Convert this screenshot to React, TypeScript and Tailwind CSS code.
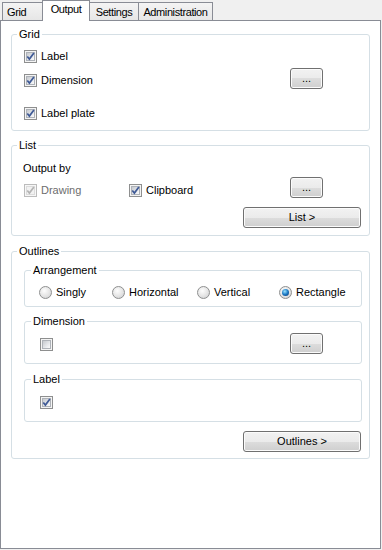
import React from "react";

function CheckBox({ checked = false, disabled = false }: { checked?: boolean; disabled?: boolean }) {
  return (
    <span
      className={
        disabled
          ? "relative w-[13px] h-[13px] shrink-0 border border-[#bcbcbc] bg-[#f7f7f7] p-px flex"
          : "relative w-[13px] h-[13px] shrink-0 border border-[#8e8f8f] bg-[#f4f4f4] p-px flex"
      }
    >
      <span
        className={
          disabled
            ? "flex-1 border border-[#dcdcdc] bg-[#f2f2f2]"
            : "flex-1 border border-[#aeb2b8] bg-[linear-gradient(135deg,#c6c9ce,#e9ebee_65%,#fafafa)]"
        }
      />
      {checked && (
        <svg className="absolute left-0 top-0" width="11" height="11" viewBox="0 0 11 11">
          <path
            d="M2.3 5.4 L4.4 8.1 L8.9 1.9"
            fill="none"
            stroke={disabled ? "#b4b4b4" : "#3f5a96"}
            strokeWidth="1.7"
          />
        </svg>
      )}
    </span>
  );
}

function Radio({ checked = false }: { checked?: boolean }) {
  return (
    <span className="w-[13px] h-[13px] shrink-0 rounded-full border border-[#8e8f8f] bg-[radial-gradient(circle_at_40%_35%,#fdfdfd,#e4e4e4_55%,#c9cbcf)] flex items-center justify-center">
      {checked && (
        <span className="w-[7px] h-[7px] rounded-full bg-[radial-gradient(circle_at_40%_35%,#9be4ff,#1a78c4_50%,#0b2f63)]" />
      )}
    </span>
  );
}

function Btn({ children, w }: { children: React.ReactNode; w: string }) {
  return (
    <div
      className={`${w} h-[21px] shrink-0 rounded-[3px] border border-[#707070] bg-[linear-gradient(to_bottom,#f2f2f2_0%,#ebebeb_50%,#dddddd_50%,#cfcfcf_100%)] shadow-[inset_0_0_0_1px_#fbfbfb] flex items-center justify-center leading-[13px] text-black`}
    >
      {children}
    </div>
  );
}

function Outer({ title, className, children }: { title: string; className: string; children: React.ReactNode }) {
  return (
    <div className={`relative border border-[#d5dfe5] rounded-[3px] ${className}`}>
      <span className="absolute -top-[7px] left-[5px] px-[2px] bg-white leading-[13px]">{title}</span>
      {children}
    </div>
  );
}

function Inner({ title, className, children }: { title: string; className: string; children: React.ReactNode }) {
  return (
    <div className={`relative border border-[#d5dfe5] rounded-[3px] ${className}`}>
      <span className="absolute -top-[7px] left-[6px] px-[2px] bg-white leading-[13px]">{title}</span>
      {children}
    </div>
  );
}

function Item({ children, disabled = false, checked = false }: { children: React.ReactNode; disabled?: boolean; checked?: boolean }) {
  return (
    <div className="flex items-center gap-[4px] h-[13px]">
      <CheckBox checked={checked} disabled={disabled} />
      <span className={disabled ? "leading-[13px] text-[#6d6d6d]" : "leading-[13px]"}>{children}</span>
    </div>
  );
}

function RadioItem({ children, checked = false, w }: { children: React.ReactNode; checked?: boolean; w: string }) {
  return (
    <div className={`${w} flex items-center gap-[4px] h-[13px]`}>
      <Radio checked={checked} />
      <span className="leading-[13px]">{children}</span>
    </div>
  );
}

export default function App() {
  return (
    <div className="w-[382px] h-[550px] bg-[#f0f0f0] overflow-hidden font-['Liberation_Sans',Arial,sans-serif] text-[11px] text-black">
      {/* tabs */}
      <div className="h-[20px] flex items-end tracking-[-0.4px]">
        <div className="ml-[2px] w-[40px] h-[18px] border border-r-0 border-b-0 border-[#898c95] bg-[linear-gradient(to_bottom,#f4f4f4,#e6e6e6)] pl-[4px] pt-[3px] leading-[13px]">
          Grid
        </div>
        <div className="relative z-10 -mb-px w-[48px] h-[21px] border border-b-0 border-[#898c95] bg-white pt-[2px] leading-[13px] text-center">
          Output
        </div>
        <div className="w-[49px] h-[18px] border border-l-0 border-b-0 border-[#898c95] bg-[linear-gradient(to_bottom,#f4f4f4,#e6e6e6)] pt-[3px] leading-[13px] text-center">
          Settings
        </div>
        <div className="w-[74px] h-[18px] border border-l-0 border-b-0 border-[#898c95] bg-[linear-gradient(to_bottom,#f4f4f4,#e6e6e6)] pt-[3px] leading-[13px] text-center">
          Administration
        </div>
      </div>

      {/* panel */}
      <div className="w-[381px] h-[529px] border border-[#898c95] bg-white px-[10px] pt-[13px]">
        <Outer title="Grid" className="h-[97px]">
          <div className="mt-[15px] pl-[12px]">
            <Item checked>Label</Item>
          </div>
          <div className="mt-[5px] flex h-[21px] pl-[12px] pr-[46px] justify-between">
            <div className="mt-[6px]">
              <Item checked>Dimension</Item>
            </div>
            <Btn w="w-[33px]">...</Btn>
          </div>
          <div className="mt-[18px] pl-[12px]">
            <Item checked>Label plate</Item>
          </div>
        </Outer>

        <Outer title="List" className="mt-[14px] h-[91px]">
          <div className="mt-[16px] pl-[11px] leading-[13px]">Output by</div>
          <div className="mt-[2px] flex h-[21px] pl-[12px] pr-[46px] justify-between">
            <div className="mt-[7px] flex">
              <div className="w-[105px]">
                <Item checked disabled>
                  Drawing
                </Item>
              </div>
              <Item checked>Clipboard</Item>
            </div>
            <Btn w="w-[33px]">...</Btn>
          </div>
          <div className="mt-[9px] flex justify-end pr-[8px]">
            <Btn w="w-[118px]">List &gt;</Btn>
          </div>
        </Outer>

        <Outer title="Outlines" className="mt-[15px] h-[208px]">
          <Inner title="Arrangement" className="mt-[18px] ml-[12px] mr-[7px] h-[37px]">
            <div className="mt-[15px] flex pl-[14px]">
              <RadioItem w="w-[73px]">Singly</RadioItem>
              <RadioItem w="w-[85px]">Horizontal</RadioItem>
              <RadioItem w="w-[82px]">Vertical</RadioItem>
              <RadioItem w="w-auto" checked>
                Rectangle
              </RadioItem>
            </div>
          </Inner>

          <Inner title="Dimension" className="mt-[14px] ml-[12px] mr-[7px] h-[43px]">
            <div className="mt-[11px] flex h-[21px] pl-[15px] pr-[38px] justify-between">
              <div className="mt-[5px]">
                <CheckBox />
              </div>
              <Btn w="w-[33px]">...</Btn>
            </div>
          </Inner>

          <Inner title="Label" className="mt-[15px] ml-[12px] mr-[7px] h-[43px]">
            <div className="mt-[16px] pl-[15px] flex">
              <CheckBox checked />
            </div>
          </Inner>

          <div className="mt-[9px] flex justify-end pr-[8px]">
            <Btn w="w-[118px]">Outlines &gt;</Btn>
          </div>
        </Outer>
      </div>
    </div>
  );
}
